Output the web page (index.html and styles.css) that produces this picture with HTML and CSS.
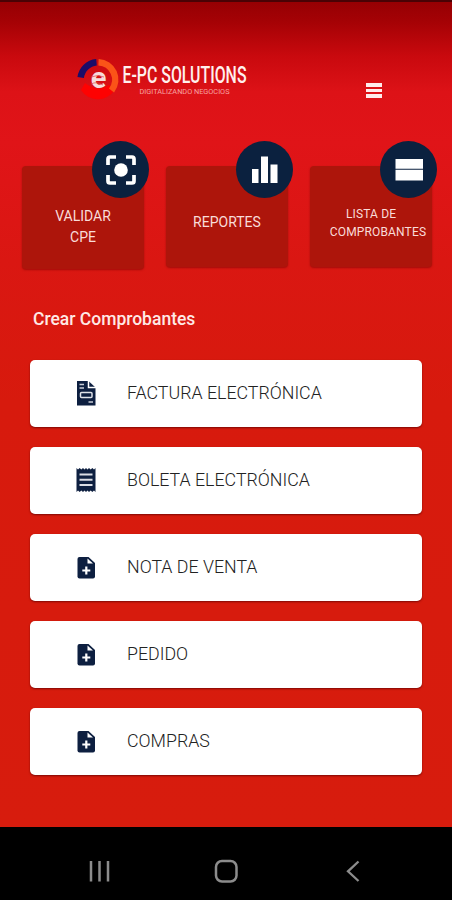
FILE: index.html
```
<!DOCTYPE html>
<html lang="es">
<head>
	<meta charset="UTF-8">
	<title>E-PC Solutions</title>
	<link rel="stylesheet" href="styles.css">
</head>
<body>
	<div class="app">
		<header class="header">
			<svg class="logo" width="176" height="44" viewBox="0 0 176 44">
				<path d="M38.300 33.600A20 20 0 0 1 5 33L9 26Q22 36 33 28Z" fill="#fe0202"/>
				<path d="M4.700 20.500A17.500 17.500 0 0 1 20.500 5.200" fill="none" stroke="#1b0c68" stroke-width="6.500"/>
				<path d="M22.500 5.200A17.500 17.500 0 0 1 35.500 33.500" fill="none" stroke="#fb5418" stroke-width="6.500"/>
				<text class="logo-e" x="22.500" y="30.500" text-anchor="middle">e</text>
				<path d="M15 20Q22 17 28 20M15 27Q21 24 27 28" fill="none" stroke="#d84a4c" stroke-width=".7"/>
				<text class="logo-name" x="46.500" y="25.500" textLength="124" lengthAdjust="spacingAndGlyphs">E-PC SOLUTIONS</text>
				<text class="logo-sub" x="63.500" y="36.500" textLength="90" lengthAdjust="spacingAndGlyphs">DIGITALIZANDO NEGOCIOS</text>
			</svg>
			<div class="menu"><i></i><i></i><i></i></div>
		</header>

		<div class="cards">
			<a class="card tall">
				<span>VALIDAR<br>CPE</span>
				<div class="badge">
					<svg width="30" height="30" viewBox="0 0 30 30">
						<path d="M2 10V4Q2 2 4 2H10M20 2H26Q28 2 28 4V10M28 20V26Q28 28 26 28H20M10 28H4Q2 28 2 26V20" fill="none" stroke="#fff" stroke-width="3.700"/>
						<circle cx="15" cy="15" r="6.800" fill="#fff"/>
					</svg>
				</div>
			</a>
			<a class="card">
				<span>REPORTES</span>
				<div class="badge">
					<svg width="30" height="30" viewBox="0 0 30 30">
						<path d="M2 14H8.500V28H2ZM11 1.500H18V28H11ZM20.500 9.500H27.500V28H20.500Z" fill="#fff"/>
					</svg>
				</div>
			</a>
			<a class="card small">
				<span>LISTA DE<br><b>COMPROBANTES</b></span>
				<div class="badge">
					<svg width="30" height="30" viewBox="0 0 30 30">
						<path d="M1.500 4H29V13.800H1.500ZM1.500 14.800H29V25.500H1.500Z" fill="#fff"/>
					</svg>
				</div>
			</a>
		</div>

		<h2 class="title">Crear Comprobantes</h2>

		<div class="list">
			<a class="item">
				<svg class="icon" width="20" height="26" viewBox="0 0 20 26">
					<path d="M1 1H12.500L19.500 7.500V25.500H1Z" fill="#0d1f40"/>
					<path d="M12.500 0V7.500H20" fill="none" stroke="#fff" stroke-width="1.500"/>
					<path d="M3.500 4.500H8M3.500 8H8M12.500 22H17" stroke="#c9ced8" stroke-width="1.500"/>
					<rect x="4.500" y="12.500" width="11.500" height="5" rx="1" fill="#0d1f40" stroke="#dfe2e8" stroke-width="1.500"/>
				</svg>
				<span>FACTURA ELECTRÓNICA</span>
			</a>
			<a class="item">
				<svg class="icon" width="20" height="26" viewBox="0 0 20 26">
					<path d="M.500 1L2 2.500 3.700 1 5.300 2.500 7 1 8.500 2.500 10 1 11.500 2.500 13 1 14.700 2.500 16.300 1 18 2.500 19.500 1V25L18 23.500 16.300 25 14.700 23.500 13 25 11.500 23.500 10 25 8.500 23.500 7 25 5.300 23.500 3.700 25 2 23.500 .500 25Z" fill="#0d1f40"/>
					<path d="M3.500 7.500H16.500M3.500 12.800H16.500M3.500 18H16.500" stroke="#dadde4" stroke-width="2"/>
				</svg>
				<span>BOLETA ELECTRÓNICA</span>
			</a>
			<a class="item">
				<svg class="icon" width="20" height="26" viewBox="0 0 20 26">
					<path d="M3.500 3H12.500L19 9V22.500Q19 24.500 17 24.500H3.500Q1.500 24.500 1.500 22.500V5Q1.500 3 3.500 3Z" fill="#0d1f40"/>
					<path d="M11.500 4.500V9.500H17Z" fill="#fff"/>
					<path d="M10.300 12.500V20.500M6.300 16.500H14.300" stroke="#fff" stroke-width="2.200"/>
				</svg>
				<span>NOTA DE VENTA</span>
			</a>
			<a class="item">
				<svg class="icon" width="20" height="26" viewBox="0 0 20 26">
					<path d="M3.500 3H12.500L19 9V22.500Q19 24.500 17 24.500H3.500Q1.500 24.500 1.500 22.500V5Q1.500 3 3.500 3Z" fill="#0d1f40"/>
					<path d="M11.500 4.500V9.500H17Z" fill="#fff"/>
					<path d="M10.300 12.500V20.500M6.300 16.500H14.300" stroke="#fff" stroke-width="2.200"/>
				</svg>
				<span>PEDIDO</span>
			</a>
			<a class="item">
				<svg class="icon" width="20" height="26" viewBox="0 0 20 26">
					<path d="M3.500 3H12.500L19 9V22.500Q19 24.500 17 24.500H3.500Q1.500 24.500 1.500 22.500V5Q1.500 3 3.500 3Z" fill="#0d1f40"/>
					<path d="M11.500 4.500V9.500H17Z" fill="#fff"/>
					<path d="M10.300 12.500V20.500M6.300 16.500H14.300" stroke="#fff" stroke-width="2.200"/>
				</svg>
				<span>COMPRAS</span>
			</a>
		</div>
	</div>

	<!-- android buttons -->
	<nav class="navbar">
		<svg width="26" height="26" viewBox="0 0 26 26">
			<path d="M5 3V23.500M13.500 3V23.500M22 3V23.500" stroke="#8c8c8c" stroke-width="2.500"/>
		</svg>
		<svg width="26" height="26" viewBox="0 0 26 26">
			<rect x="3" y="3" width="20.500" height="20.500" rx="6" fill="none" stroke="#8c8c8c" stroke-width="2.500"/>
		</svg>
		<svg width="26" height="26" viewBox="0 0 26 26">
			<path d="M18.500 3.500L8 13.300L18.500 23" fill="none" stroke="#8c8c8c" stroke-width="2.300"/>
		</svg>
	</nav>
</body>
</html>
```
FILE: styles.css
```
*{
	box-sizing: border-box;
}

body{
	margin: 0;
	height: 900px;
	font-family: Roboto, "Liberation Sans", sans-serif;
	background: #000;
}

.app{
	height: 827px;
	border-top: 2px solid #4a0205;
	background: linear-gradient(#960003 0, #a50205 20px, #c9090e 54px, #dd1217 90px, #e01418 140px, #da1712 260px, #d71a0d 400px, #d71c0d 100%);
}

.header{
	height: 164px;
	padding: 55px 70px 0 76px;
	display: flex;
	justify-content: space-between;
	align-items: flex-start;
}

.logo{
	display: block;
	overflow: visible;
}

.logo-e{
	font-size: 29px;
	font-weight: 700;
	fill: #f7dcdc;
}

.logo-name{
	font-size: 23.5px;
	font-weight: 500;
	fill: #fff0ee;
}

.logo-sub{
	font-size: 7px;
	fill: #f7a3a3;
}

.menu{
	width: 16px;
	margin-top: 26px;
}

.menu i{
	display: block;
	height: 3.500px;
	margin-bottom: 2px;
	background: #ffecec;
}

/* top cards */
.cards{
	display: flex;
	gap: 22px;
	height: 103px;
	padding-left: 22px;
	align-items: flex-start;
}

.card{
	position: relative;
	width: 122px;
	height: 101px;
	display: flex;
	align-items: center;
	justify-content: center;
	text-align: center;
	border-radius: 4px;
	background: #ad150b;
	box-shadow: 0 1px 2px rgba(110,0,0,0.5);
	color: #f9dcd9;
	font-size: 14px;
	line-height: 21px;
	padding-top: 12px;
}

.tall{
	height: 103px;
	padding-top: 18px;
}

.small{
	font-size: 12px;
	line-height: 18px;
	letter-spacing: 0.15px;
}

.small b{
	display: block;
	font-weight: 400;
	margin: 0 -10px 0 4px;
}

.badge{
	position: absolute;
	top: -25px;
	right: -5px;
	width: 57px;
	height: 57px;
	border-radius: 50%;
	background: #0b213f;
	display: flex;
	align-items: center;
	justify-content: center;
}

.title{
	margin: 0 0 0 33px;
	padding-top: 38px;
	height: 91px;
	font-size: 17.5px;
	line-height: 24px;
	font-weight: 500;
	color: #ffe9e6;
}

.list{
	padding: 0 30px;
	display: flex;
	flex-direction: column;
	gap: 20px;
}

.item{
	height: 67px;
	display: flex;
	align-items: center;
	padding-left: 46px;
	padding-bottom: 1px;
	background: #fff;
	border-radius: 5px;
	box-shadow: 0 1px 2px rgba(90,0,0,0.7);
	font-size: 17.8px;
	font-weight: 300;
	color: #222;
}

.item span{
	padding-bottom: 1px;
}

.icon{
	margin-right: 31px;
}

.navbar{
	height: 73px;
	padding: 31px 86px 0;
	display: flex;
	justify-content: space-between;
	align-items: flex-start;
	background: #000;
}
```
